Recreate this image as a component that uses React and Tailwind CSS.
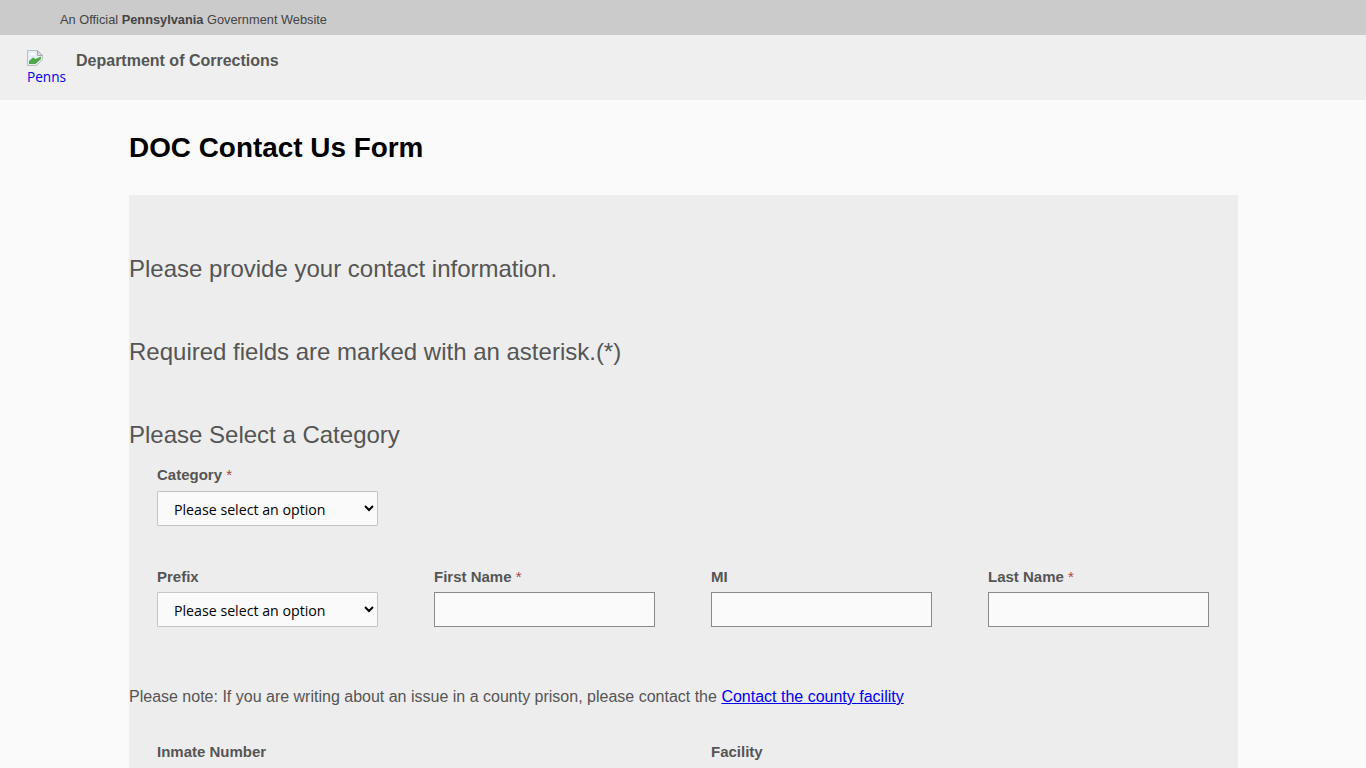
import React from 'react';

const Req = () => <span className="font-normal text-[#a94442]"> *</span>;

const Field = ({ label, required, gap = 'mt-[5px]', children }) => (
  <div className="w-[221px]">
    <label className="block h-[20px] text-[15px] leading-[20px] font-bold text-[#555]">
      {label}
      {required && <Req />}
    </label>
    <div className={gap}>{children}</div>
  </div>
);

const Select = () => (
  <select className="block h-[35px] w-[221px] rounded-[1px] border border-[#c4c4c4] bg-[#fafafa] pt-[2px] pl-[12px] font-['Open_Sans',sans-serif] text-[14.2px] text-black appearance-auto">
    <option>Please select an option</option>
  </select>
);

const Input = () => <input type="text" className="block h-[35px] w-[221px] border border-[#8a8a8a] bg-[#fafafa]" />;

// broken image placeholder, page with folded corner and green hill
const BrokenImage = () => (
  <svg width="16" height="16" viewBox="0 0 16 16" className="block">
    <path d="M0.5 0.5H10.5L15.5 5.5V9.5L9.5 15.5H0.5Z" fill="#e6eefa" stroke="#bdbdbd" />
    <path d="M10.5 0.5V5.5H15.5Z" fill="#dcdcdc" stroke="#a8a8a8" />
    <path d="M2 14V11L6 7.5L8.5 9L14 6.5V9L8.5 14Z" fill="#4fa84a" />
    <path d="M3 3H8V5H3Z" fill="#ffffff" />
  </svg>
);

export default function App() {
  return (
    <div className="h-screen overflow-hidden bg-[#fafafa] font-['Liberation_Sans',Arial,sans-serif]">
      <div className="flex h-[35px] items-center bg-[#cbcbcb] pt-[4px] pl-[60px] text-[12.8px] text-[#444]">
        <span>
          An Official <b className="font-bold">Pennsylvania</b> Government Website
        </span>
      </div>

      <div className="flex h-[65px] items-start bg-[#efefef] pl-[27px]">
        <a href="#" className="mt-[15px] block w-[40px] font-['Open_Sans',sans-serif] text-[13.6px] leading-[20px] text-[#0000ee]">
          <BrokenImage />
          <span className="mt-[1px] block whitespace-nowrap">Penns</span>
        </a>
        <div className="mt-[16px] ml-[9px] text-[16px] leading-[20px] font-bold text-[#555]">Department of Corrections</div>
      </div>

      <div className="ml-[129px] w-[1109px]">
        <h1 className="mt-[30px] h-[35px] text-[27.9px] leading-[35px] font-bold text-black">DOC Contact Us Form</h1>

        <div className="mt-[30px] bg-[#ededed] pb-10">
          <p className="pt-[60px] text-[24px] leading-[28px] text-[#555]">Please provide your contact information.</p>
          <p className="mt-[55px] text-[24px] leading-[28px] text-[#555]">Required fields are marked with an asterisk.(*)</p>
          <p className="mt-[55px] text-[24px] leading-[28px] text-[#555]">Please Select a Category</p>

          <div className="mt-[16px] pl-[28px]">
            <Field label="Category" required gap="mt-[6px]">
              <Select />
            </Field>

            <div className="mt-[41px] flex gap-[56px]">
              <Field label="Prefix">
                <Select />
              </Field>
              <Field label="First Name" required>
                <Input />
              </Field>
              <Field label="MI">
                <Input />
              </Field>
              <Field label="Last Name" required>
                <Input />
              </Field>
            </div>
          </div>

          <p className="mt-[60px] text-[16px] leading-[20px] text-[#555]">
            Please note: If you are writing about an issue in a county prison, please contact the{' '}
            <a href="#" className="text-[#0000ee] underline">Contact the county facility</a>
          </p>

          <div className="mt-[35px] flex pl-[28px]">
            <div className="w-[554px]">
              <Field label="Inmate Number" gap="mt-[6px]">
                <Input />
              </Field>
            </div>
            <Field label="Facility" gap="mt-[6px]">
              <Select />
            </Field>
          </div>
        </div>
      </div>
    </div>
  );
}
